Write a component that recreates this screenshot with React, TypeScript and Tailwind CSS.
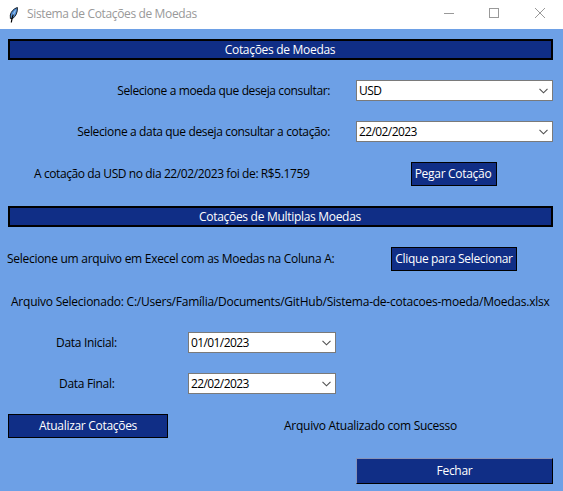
import type { ReactNode } from 'react';

function Feather() {
  return (
    <svg width="10" height="16" viewBox="0 0 10 16" className="shrink-0">
      <path d="M8.400 0.500C5 1.500 2 4.500 1.300 8L1.400 11.500L3.600 11.500C6.800 9.500 8.800 5 8.400 0.500Z" fill="#4f8fd8" stroke="#1a2028" strokeWidth="1" />
      <path d="M6.500 3.500C5 5.500 4 8 3.200 11" stroke="#b9d6f2" strokeWidth="0.900" fill="none" />
      <path d="M4.300 7.500C3.400 9.500 2.700 12 2.300 15.500" stroke="#000" strokeWidth="1.200" fill="none" />
    </svg>
  );
}

function Banner({ children }: { children: ReactNode }) {
  return (
    <h2 className="flex h-[21px] items-center justify-center border-2 border-black bg-[#102e86] pr-px text-white">
      {children}
    </h2>
  );
}

function Combo({ value, className }: { value: string; className: string }) {
  return (
    <div className={`flex h-[21px] shrink-0 items-center justify-between border border-[#7a7a7a] bg-white pr-1 pl-0.5 tracking-[-0.6px] ${className}`}>
      <span>{value}</span>
      <svg width="9" height="6" viewBox="0 0 9 6" className="shrink-0">
        <path d="M0.500 0.800L4.500 4.800L8.500 0.800" fill="none" stroke="#505050" strokeWidth="1.100" />
      </svg>
    </div>
  );
}

function Button({ children, className }: { children: ReactNode; className: string }) {
  return (
    <button className={`flex h-6 shrink-0 items-center justify-center border border-black bg-[#102e86] text-white ${className}`}>
      {children}
    </button>
  );
}

export default function App() {
  return (
    <div className="flex h-[491px] w-[563px] flex-col overflow-hidden bg-[#6da0e6] font-['Open_Sans','Noto_Sans',sans-serif] text-[12px] leading-4 tracking-[-0.3px] whitespace-nowrap text-black">
      <header className="flex h-[29px] shrink-0 items-center bg-white pl-[9px] text-[#999999]">
        <div className="flex h-[26px] items-center"><Feather /></div>
        <h1 className="ml-2 pb-px tracking-[-0.36px]">Sistema de Cotações de Moedas</h1>
        <svg width="103" height="12" viewBox="0 0 103 12" className="mr-[17px] mb-[3px] ml-auto" fill="none" stroke="#999999" shapeRendering="crispEdges">
          <path d="M1 6.500H11" />
          <rect x="46.500" y="1.500" width="9" height="9" />
          <path d="M92 1L102 11M102 1L92 11" shapeRendering="auto" />
        </svg>
      </header>
      <main className="flex flex-col pt-[10px] pr-[10px] pl-2">
        <Banner><span>Cotações de Moedas</span></Banner>
        <div className="mt-5 flex items-center justify-end gap-[26px]">
          <label className="tracking-[-0.38px]">Selecione a moeda que deseja consultar:</label>
          <Combo value="USD" className="w-[197px]" />
        </div>
        <div className="mt-5 flex items-center justify-end gap-[26px]">
          <label className="tracking-[-0.36px]">Selecione a data que deseja consultar a cotação:</label>
          <Combo value="22/02/2023" className="w-[197px]" />
        </div>
        <div className="mt-5 mb-5 flex items-center justify-between pr-14 pl-[26px]">
          <p className="tracking-[-0.4px]">A cotação da USD no dia 22/02/2023 foi de: R$5.1759</p>
          <Button className="w-[86px] pr-0.5">Pegar Cotação</Button>
        </div>
        <Banner><span>Cotações de Multiplas Moedas</span></Banner>
        <div className="mt-5 flex items-center justify-between pr-9">
          <label className="-ml-px tracking-[-0.28px]">Selecione um arquivo em Execel com as Moedas na Coluna A:</label>
          <Button className="w-[126px] tracking-[-0.34px]">Clique para Selecionar</Button>
        </div>
        <p className="mt-[23px] ml-[3px] tracking-[-0.235px]">Arquivo Selecionado: C:/Users/Família/Documents/GitHub/Sistema-de-cotacoes-moeda/Moedas.xlsx</p>
        <div className="mt-[22px] flex items-center">
          <label className="w-[180px] pl-12">Data Inicial:</label>
          <Combo value="01/01/2023" className="w-[148px]" />
        </div>
        <div className="mt-5 flex items-center">
          <label className="w-[180px] pl-[51px]">Data Final:</label>
          <Combo value="22/02/2023" className="w-[148px]" />
        </div>
        <div className="mt-5 flex items-center">
          <Button className="w-40">Atualizar Cotações</Button>
          <p className="ml-[116px] tracking-[-0.26px]">Arquivo Atualizado com Sucesso</p>
        </div>
        <button className="mt-5 flex h-[26px] w-[197px] items-center justify-center self-end border border-t-[#8793b8] border-r-black border-b-black border-l-[#8793b8] bg-[#102e86] text-white">Fechar</button>
      </main>
    </div>
  );
}
